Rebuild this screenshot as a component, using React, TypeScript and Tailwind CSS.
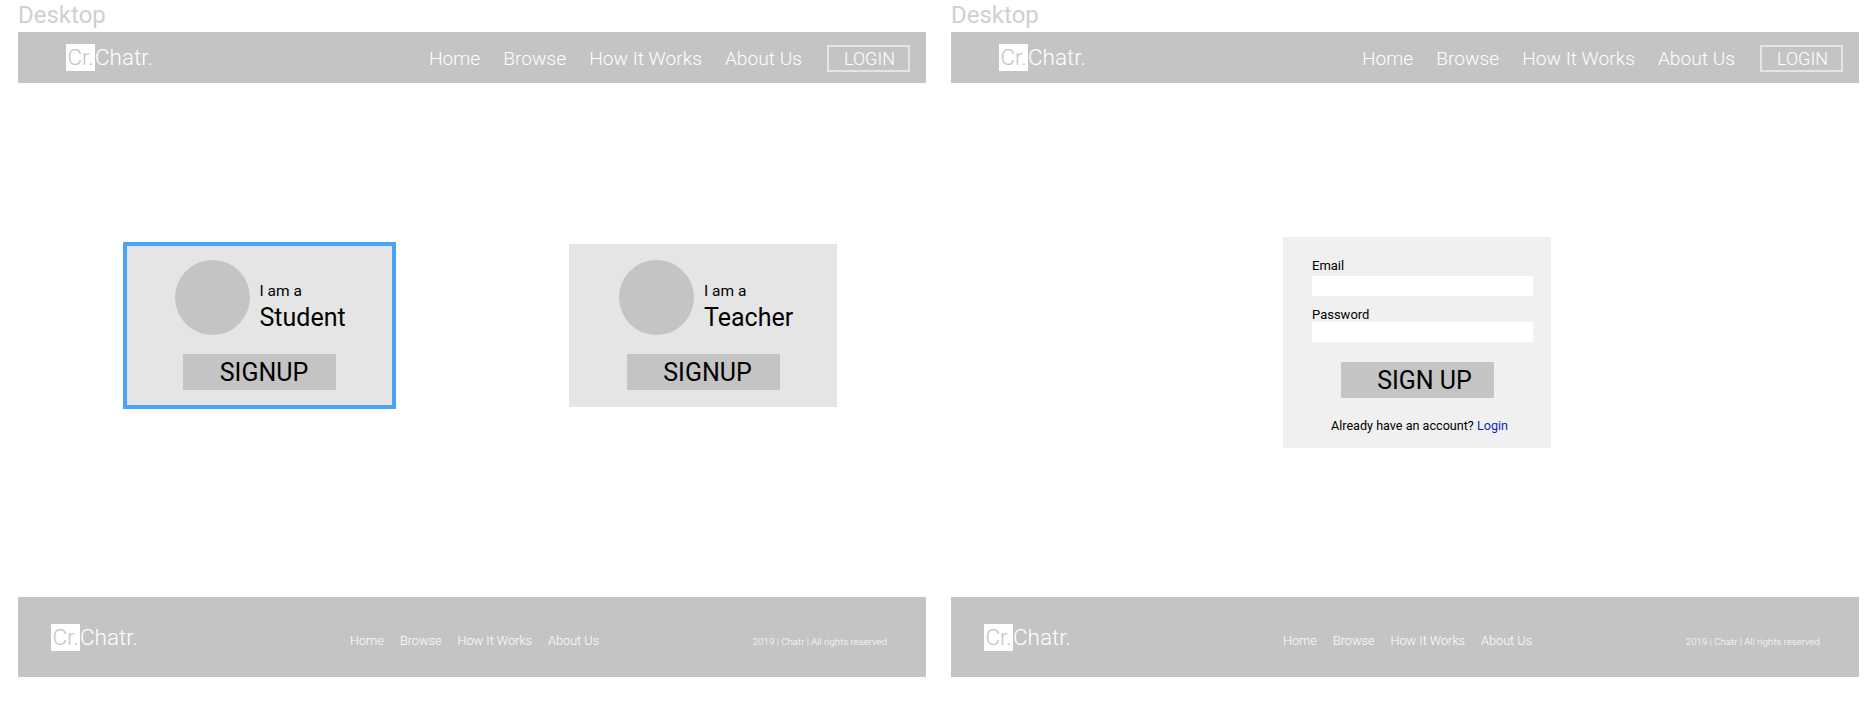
const navLinks = ['Home', 'Browse', 'How It Works', 'About Us']

function Logo() {
  return (
    <div className="flex items-center text-[22.5px] font-light leading-none">
      <span className="flex h-[27px] w-[29px] items-center justify-center bg-white text-[#c4c4c4]">Cr.</span>
      <span className="text-white">Chatr.</span>
    </div>
  )
}

function Header() {
  return (
    <header className="flex h-[51px] items-center bg-[#c4c4c4] pl-[48px] pr-[16px] text-white">
      <Logo />
      <nav className="ml-auto mt-[4px] flex items-center gap-[23px] text-[19.2px] font-light">
        {navLinks.map(link => (
          <span key={link}>{link}</span>
        ))}
      </nav>
      <button className="ml-[25px] mt-[1px] flex h-[27px] w-[83px] items-center justify-end border-2 border-[#e5e5e5] pr-[13px] text-[18px] font-light">
        LOGIN
      </button>
    </header>
  )
}

function Footer() {
  return (
    <footer className="flex h-[80px] items-center bg-[#c4c4c4] pl-[33px] pr-[39px] text-white">
      <div className="w-[299px]">
        <Logo />
      </div>
      <nav className="mt-[7px] flex gap-[16px] text-[12.7px] font-light">
        {navLinks.map(link => (
          <span key={link}>{link}</span>
        ))}
      </nav>
      <span className="ml-auto mt-[11px] text-[9.7px] font-light">2019 | Chatr | All rights reserved</span>
    </footer>
  )
}

function RoleCard({ role, selected }: { role: string; selected?: boolean }) {
  return (
    <div
      className={
        selected
          ? 'flex h-[167px] w-[273px] flex-col items-center border-4 border-[#4aa3f5] bg-[#e5e5e5] pt-[14px]'
          : 'flex h-[163px] w-[268px] flex-col items-center bg-[#e5e5e5] pt-[16px]'
      }
    >
      <div className={selected ? 'flex w-[170px] items-start gap-[10px] self-center' : 'ml-[2px] flex w-[170px] items-start gap-[10px] self-center'}>
        <div className="h-[75px] w-[75px] shrink-0 rounded-full bg-[#c4c4c4]" />
        <div className="mt-[19px] text-black">
          <p className="text-[15.5px] leading-[24px]">I am a</p>
          <p className="text-[25px] leading-[30px]">{role}</p>
        </div>
      </div>
      <button className="mt-[19px] h-[36px] w-[153px] bg-[#c4c4c4] pl-[9px] pt-[1px] text-[25px] leading-[36px] text-black">SIGNUP</button>
    </div>
  )
}

function SignupForm() {
  return (
    <div className="ml-[332px] flex h-[211px] w-[268px] flex-col bg-[#f0f0f0] pl-[29px] pr-[18px] pt-[18px] text-black">
      <label className="text-[13px] leading-[21px]">Email</label>
      <div className="h-[20px] bg-white" />
      <label className="mt-[12px] text-[13px] leading-[14px]">Password</label>
      <div className="h-[20px] bg-white" />
      <button className="ml-[29px] mt-[20px] h-[36px] w-[153px] bg-[#c4c4c4] pl-[14px] pt-[1px] text-[25px] leading-[36px]">SIGN UP</button>
      <p className="-ml-[6px] mt-[18px] whitespace-nowrap text-center text-[12.6px] leading-[19px]">
        Already have an account? <span className="text-[#0b1fc4]">Login</span>
      </p>
    </div>
  )
}

function Frame({ children }: { children: React.ReactNode }) {
  return (
    <section className="w-[908px]">
      <h2 className="h-[32px] text-[24px] leading-[30px] text-[#d0d0d0]">Desktop</h2>
      <Header />
      <main className="flex h-[514px] bg-white">{children}</main>
      <Footer />
    </section>
  )
}

export default function App() {
  return (
    <div className="flex h-[702px] gap-[25px] overflow-hidden bg-white pl-[18px] font-['Roboto',sans-serif]">
      <Frame>
        <div className="ml-[105px] mt-[159px] flex h-[167px] items-center gap-[173px]">
          <RoleCard role="Student" selected />
          <RoleCard role="Teacher" />
        </div>
      </Frame>
      <Frame>
        <div className="mt-[154px]">
          <SignupForm />
        </div>
      </Frame>
    </div>
  )
}
